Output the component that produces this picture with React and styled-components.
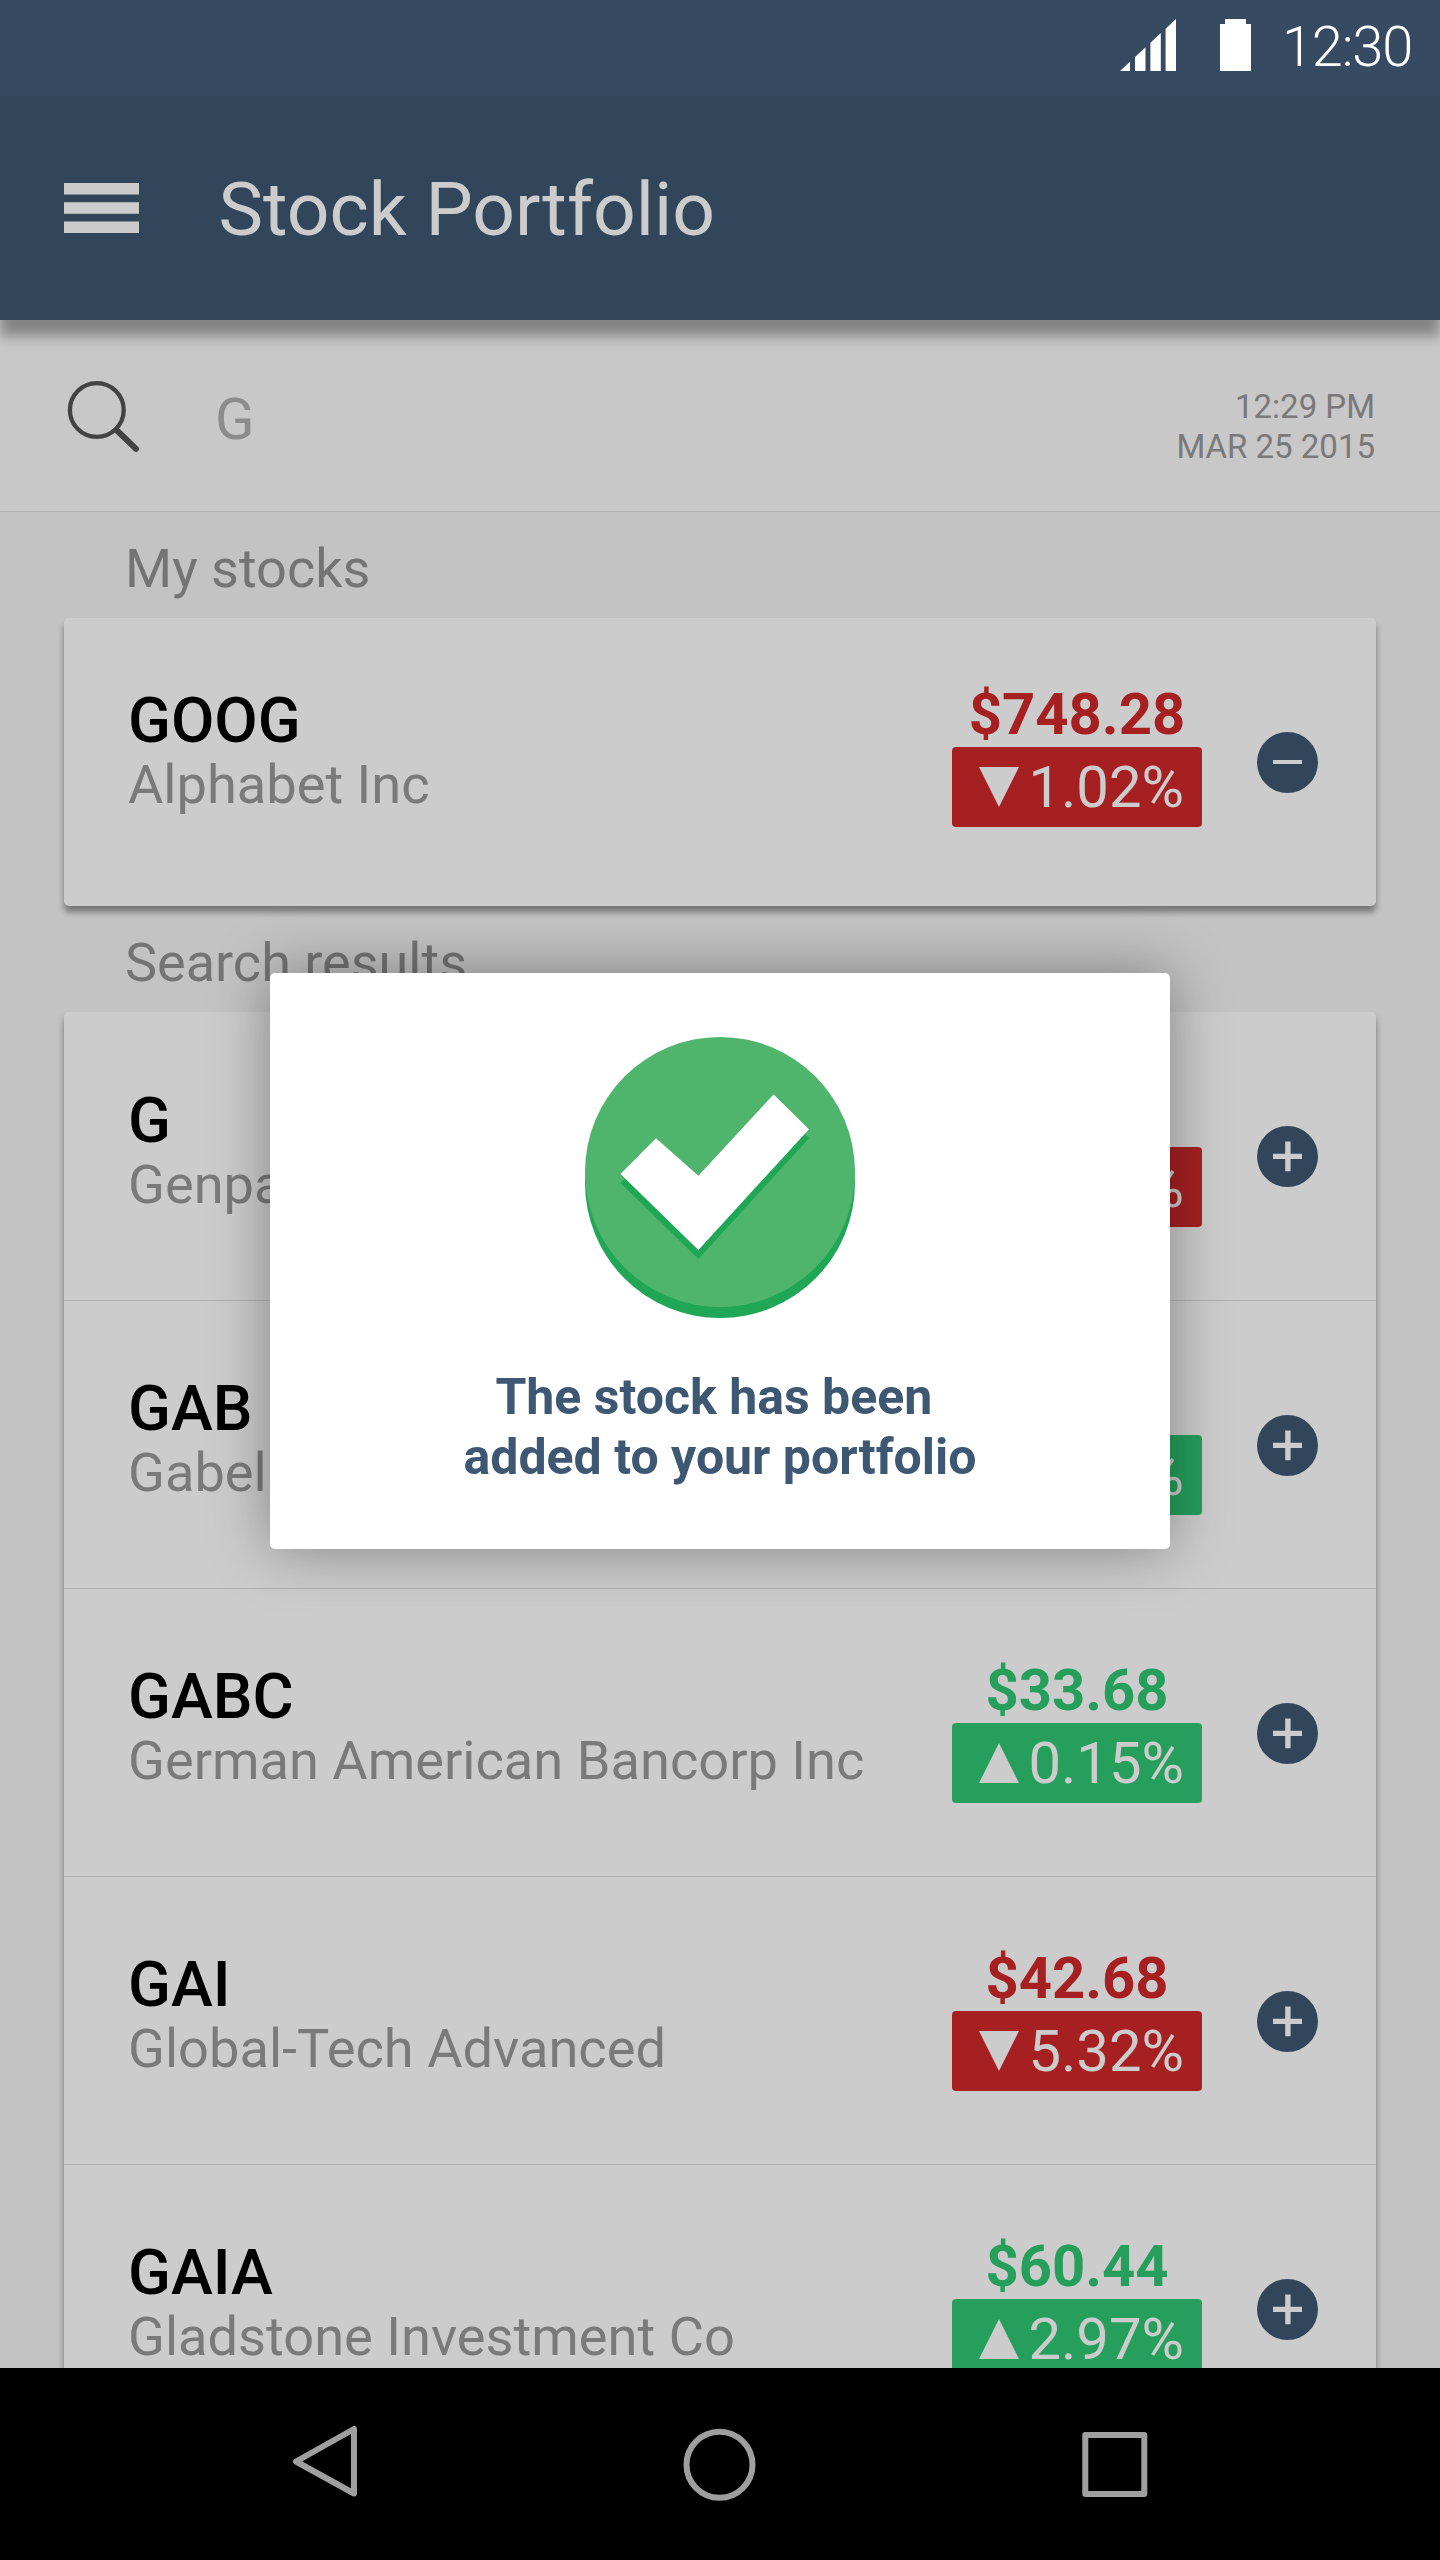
import React from "react";
import styled, { createGlobalStyle } from "styled-components";

const GlobalStyle = createGlobalStyle`
  *, *::before, *::after { box-sizing: border-box; }
  body {
    margin: 0;
    background: #f4f4f4;
    font-family: Roboto, "Liberation Sans", sans-serif;
  }
`;

const NAVY = "#3f5872";
const RED = "#d0292b";
const GREEN = "#2fc772";

const Screen = styled.div`
  position: relative;
  display: flex;
  flex-direction: column;
  width: 1440px;
  height: 2560px;
  overflow: hidden;
  background: #f4f4f4;
`;

const StatusBar = styled.div`
  display: flex;
  flex: none;
  justify-content: flex-end;
  align-items: flex-start;
  height: 96px;
  padding: 19px 28px 0 0;
  background: #364b61;
  color: #fff;
`;

const SignalIcon = styled.svg`
  width: 56px;
  height: 52px;
  margin-right: 44px;
`;

const BatteryIcon = styled.svg`
  width: 31px;
  height: 52px;
  margin-right: 31px;
`;

const Clock = styled.span`
  font-size: 56px;
  font-weight: 300;
  letter-spacing: -1.2px;
  line-height: 56px;
`;

const AppView = styled.div`
  position: relative;
  display: flex;
  flex: 1;
  flex-direction: column;
  min-height: 0;
  overflow: hidden;
`;

const Header = styled.header`
  position: relative;
  z-index: 1;
  display: flex;
  flex: none;
  align-items: center;
  gap: 79.5px;
  height: 224px;
  padding-left: 64px;
  background: ${NAVY};
  box-shadow: 0 16px 12px rgba(0, 0, 0, 0.34);
`;

const MenuIcon = styled.svg`
  width: 75px;
  height: 50px;
`;

const Title = styled.h1`
  margin: 0;
  padding-top: 2px;
  color: #fff;
  font-size: 75px;
  font-weight: 400;
  line-height: 88px;
`;

const SearchBar = styled.div`
  display: flex;
  flex: none;
  align-items: flex-start;
  height: 192px;
  padding: 60px 65px 0 66px;
  background: #fafafa;
  border-bottom: 1px solid #dedede;
`;

const SearchIcon = styled.svg`
  width: 74px;
  height: 74px;
  margin-right: 75px;
`;

const Query = styled.span`
  flex: 1;
  padding-top: 5px;
  color: #afafaf;
  font-size: 58px;
  line-height: 68px;
`;

const Stamp = styled.div`
  padding-top: 7px;
  color: #989898;
  font-size: 33px;
  line-height: 40px;
  text-align: right;
`;

const SectionTitle = styled.h2`
  flex: none;
  height: 106px;
  margin: 0;
  padding: 25px 0 0 125px;
  color: #929292;
  font-size: 54px;
  font-weight: 400;
  line-height: 63px;
`;

const Card = styled.section`
  flex: none;
  margin: 0 64px;
  background: #fff;
  border-radius: 5px;
  box-shadow: 0 6px 6px rgba(0, 0, 0, 0.4);
`;

const Row = styled.div`
  display: grid;
  grid-template-columns: 824px 250px 55px 61px;
  height: 288px;
  padding-left: 64px;
  box-shadow: ${({ $divided }) => ($divided ? "inset 0 1px 0 #dedede" : "none")};
`;

const Names = styled.div`
  padding-top: ${({ $inset }) => 70 + $inset}px;
  white-space: nowrap;
`;

const Ticker = styled.div`
  color: #000;
  font-size: 63px;
  font-weight: 500;
  line-height: 65px;
`;

const Company = styled.div`
  color: #999;
  font-size: 54.2px;
  line-height: 63px;
`;

const Quote = styled.div`
  padding-top: ${({ $inset }) => 65 + $inset}px;
`;

const Price = styled.div`
  margin-bottom: 2px;
  color: ${({ $up }) => ($up ? GREEN : RED)};
  font-size: 58px;
  font-weight: 700;
  line-height: 62px;
  text-align: center;
`;

const Badge = styled.div`
  display: flex;
  align-items: center;
  justify-content: space-between;
  height: 80px;
  padding: 0 18px 0 27px;
  border-radius: 4px;
  background: ${({ $up }) => ($up ? GREEN : RED)};
  color: #fff;
  font-size: 58px;
  line-height: 80px;
`;

const TrendIcon = styled.svg`
  width: 40px;
  height: 40px;
  transform: ${({ $up }) => ($up ? "none" : "rotate(180deg)")};
`;

const ActionButton = styled.button`
  grid-column: 4;
  width: 61px;
  height: 61px;
  margin: ${({ $divided }) => ($divided ? 115 : 114)}px 0 0;
  padding: 0;
  border: 0;
  background: none;
`;

const Scrim = styled.div`
  position: absolute;
  inset: 0;
  z-index: 2;
  background: rgba(0, 0, 0, 0.2);
`;

const Dialog = styled.div`
  position: absolute;
  top: 877px;
  left: 270px;
  z-index: 3;
  display: flex;
  flex-direction: column;
  align-items: center;
  width: 900px;
  height: 576px;
  padding-top: 64px;
  border-radius: 5px;
  background: #fff;
  box-shadow: 0 0 60px rgba(0, 0, 0, 0.36);
`;

const CheckIcon = styled.svg`
  width: 270px;
  height: 281px;
`;

const Message = styled.p`
  margin: 49px 0 0;
  color: #3e5873;
  font-size: 50px;
  font-weight: 700;
  line-height: 60px;
  text-align: center;
  white-space: pre;
`;

const NavBar = styled.nav`
  display: grid;
  flex: none;
  grid-template-columns: repeat(3, 1fr);
  justify-items: center;
  height: 192px;
  padding: 56px 128px 0;
  background: #000;
`;

const NavIcon = styled.svg`
  width: 74px;
  height: 80px;
  fill: none;
  stroke: #9f9f9f;
  stroke-width: 6px;
  stroke-linejoin: round;
`;

const MINE = [
  { ticker: "GOOG", company: "Alphabet Inc", price: "$748.28", change: "1.02%", up: false },
];

const RESULTS = [
  { ticker: "G", company: "Genpact Limited", price: "$27.18", change: "0.62%", up: false },
  { ticker: "GAB", company: "Gabelli Equity Trust", price: "$6.52", change: "0.46%", up: true },
  { ticker: "GABC", company: "German American Bancorp Inc", price: "$33.68", change: "0.15%", up: true },
  { ticker: "GAI", company: "Global-Tech Advanced", price: "$42.68", change: "5.32%", up: false },
  { ticker: "GAIA", company: "Gladstone Investment Co", price: "$60.44", change: "2.97%", up: true },
];

function StockRow({ stock, inset = 0, divided = false, owned = false }) {
  return (
    <Row $divided={divided}>
      <Names $inset={inset}>
        <Ticker>{stock.ticker}</Ticker>
        <Company>{stock.company}</Company>
      </Names>
      <Quote $inset={inset}>
        <Price $up={stock.up}>{stock.price}</Price>
        <Badge $up={stock.up}>
          <TrendIcon $up={stock.up} viewBox="0 0 40 40">
            <path d="M20 0 40 40H0Z" fill="#fff" />
          </TrendIcon>
          <span>{stock.change}</span>
        </Badge>
      </Quote>
      <ActionButton $divided={divided} aria-label={owned ? "Remove" : "Add"}>
        <svg width="61" height="61" viewBox="0 0 61 61" display="block">
          <circle cx="30.5" cy="30.5" r="30.5" fill={NAVY} />
          {owned ? (
            <rect x="16" y="28" width="29" height="4" fill="#fff" />
          ) : (
            <path d="M16 27.7h12.2V15.5h5.4v12.2H45v5.3H33.6v12.2h-5.4V33H16Z" fill="#fff" />
          )}
        </svg>
      </ActionButton>
    </Row>
  );
}

export default function App() {
  return (
    <Screen>
      <GlobalStyle />
      <StatusBar>
        <SignalIcon viewBox="0 0 56 52" fill="#fff">
          <path d="M0 52 10 42.7V52ZM15 52V38.1L25.5 28.3V52ZM30.4 52V23.8L40.8 14.1V52ZM45.6 52V9.7L56 0V52Z" />
        </SignalIcon>
        <BatteryIcon viewBox="0 0 31 52" fill="#fff">
          <path d="M5 0h21v5h5v47H0V5h5Z" />
        </BatteryIcon>
        <Clock>12:30</Clock>
      </StatusBar>

      <AppView>
        <Header>
          <MenuIcon viewBox="0 0 75 50" fill="#fff">
            <path d="M0 0h75v11.6H0ZM0 19.2h75v11.6H0ZM0 38.4h75V50H0Z" />
          </MenuIcon>
          <Title>Stock Portfolio</Title>
        </Header>

        <SearchBar>
          <SearchIcon viewBox="0 0 74 74" fill="none" stroke="#545454" strokeLinecap="round">
            <circle cx="30.8" cy="30" r="26.9" strokeWidth="4.3" />
            <path d="M51 50.5 70 68.8" strokeWidth="6" />
          </SearchIcon>
          <Query>G</Query>
          <Stamp>
            12:29 PM
            <br />
            MAR 25 2015
          </Stamp>
        </SearchBar>

        <SectionTitle>My stocks</SectionTitle>
        <Card>
          {MINE.map((stock) => (
            <StockRow key={stock.ticker} stock={stock} owned />
          ))}
        </Card>

        <SectionTitle>Search results</SectionTitle>
        <Card>
          {RESULTS.map((stock, index) => (
            <StockRow key={stock.ticker} stock={stock} inset={6} divided={index > 0} />
          ))}
        </Card>

        <Scrim />
        <Dialog role="dialog">
          <CheckIcon viewBox="0 0 270 281">
            <circle cx="135" cy="146" r="135" fill="#1fa756" />
            <circle cx="135" cy="135" r="135" fill="#4fb56d" />
            <path d="M35.5 146 71 110.2 113.4 147.7 188.6 66.5 224 101.2 113.4 222Z" fill="#1fa756" />
            <path d="M35.5 137 71 101.2 113.4 138.7 188.6 57.5 224 92.2 113.4 213Z" fill="#fff" />
          </CheckIcon>
          <Message>{"The stock has been \nadded to your portfolio"}</Message>
        </Dialog>
      </AppView>

      <NavBar>
        <NavIcon viewBox="0 0 74 80">
          <path d="M8 37.5 66 5V69.5Z" />
        </NavIcon>
        <NavIcon viewBox="0 0 74 80">
          <circle cx="36.5" cy="40.7" r="33" />
        </NavIcon>
        <NavIcon viewBox="0 0 74 80">
          <rect x="7.3" y="11" width="59" height="59" />
        </NavIcon>
      </NavBar>
    </Screen>
  );
}
